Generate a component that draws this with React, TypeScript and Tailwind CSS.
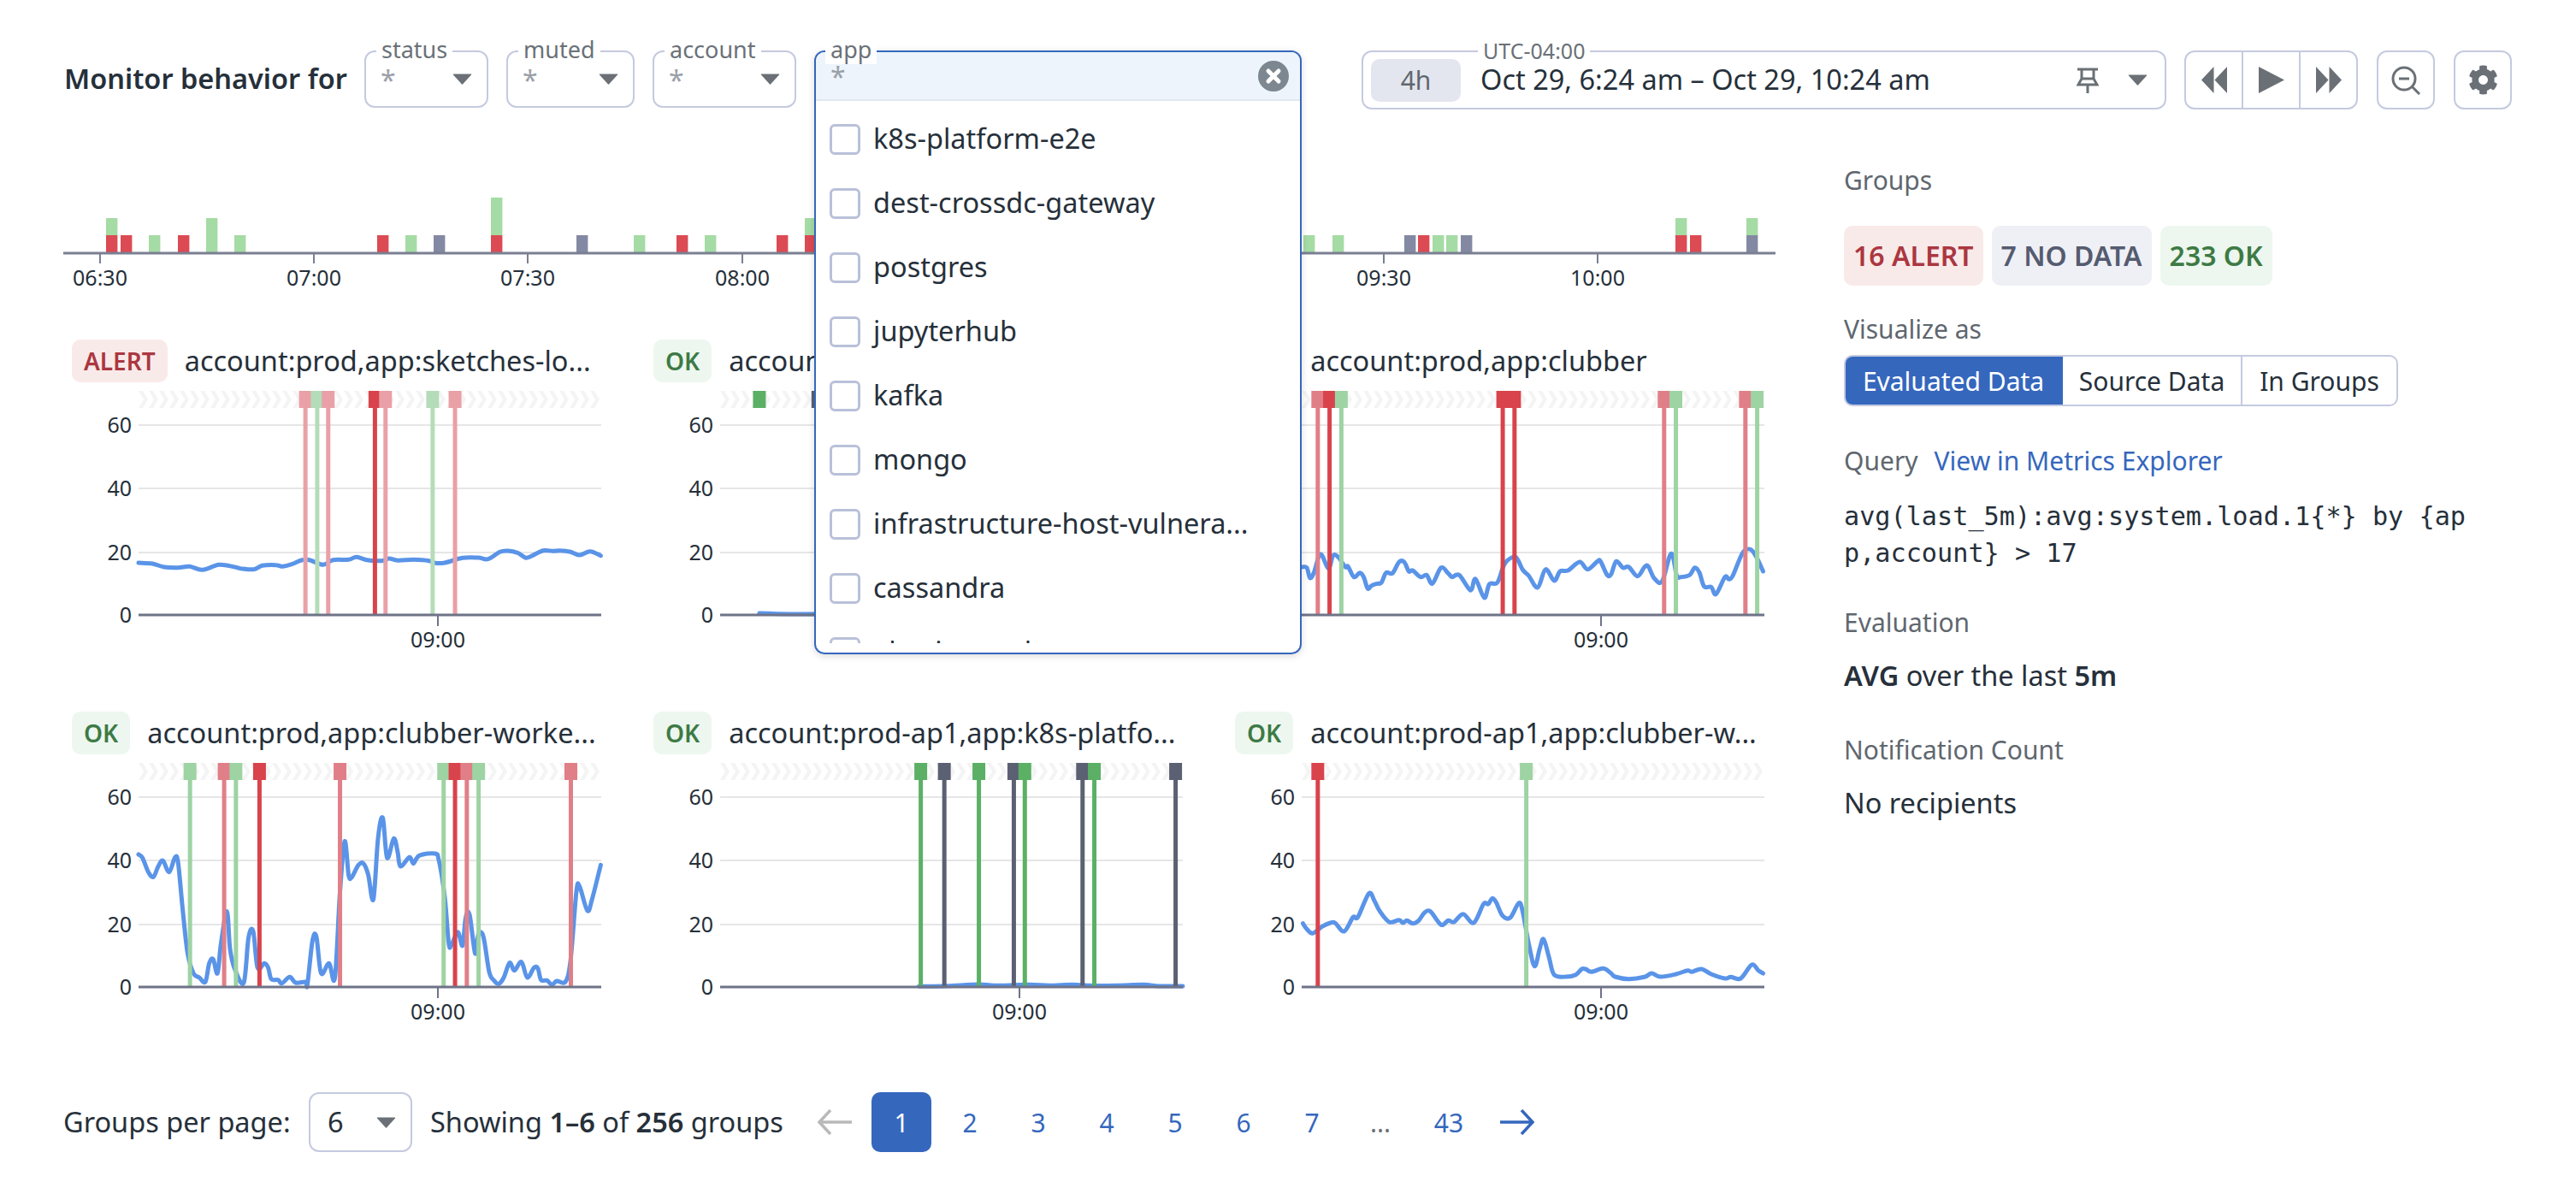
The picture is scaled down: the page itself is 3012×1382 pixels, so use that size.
import { FaCog } from "react-icons/fa";

type Pt = [number, number];
type Marker = [number, string];

const PINK = "#e9a0a7";
const SOFT_GREEN = "#b5dcb9";
const RED = "#d9434c";
const ROSE = "#e17f88";
const GREEN = "#9ed3a3";
const DARK_GREEN = "#5bb065";
const SLATE = "#5b6072";

// trace points are read off the reference crops, so they get scaled back here
const SCALE_X = 2.178;
const SCALE_Y = 3;
const PLOT_W = 541;
const PLOT_H = 262;
const LEFT = 78;

interface ChartProps {
  id: string;
  status: "ALERT" | "OK";
  title: string;
  x0: number;
  y0: number;
  line: Pt[];
  markers: Marker[];
  bandOnly?: boolean;
}

const charts: ChartProps[] = [
  {
    id: "a",
    status: "ALERT",
    title: "account:prod,app:sketches-lo...",
    x0: 265,
    y0: 1018,
    markers: [
      [690, PINK],
      [720, SOFT_GREEN],
      [748, PINK],
      [867, RED],
      [894, PINK],
      [1014, SOFT_GREEN],
      [1071, PINK],
    ],
    line: [
      [265, 835], [300, 838], [330, 850], [365, 852], [395, 848], [428, 860], [470, 842], [510, 850], [525, 855],
      [558, 858], [580, 845], [615, 843], [632, 848], [655, 840], [680, 826], [700, 825], [735, 842], [760, 825],
      [800, 824], [820, 815], [850, 826], [885, 828], [903, 820], [925, 827], [965, 824], [1005, 828], [1020, 836],
      [1045, 835], [1090, 818], [1130, 817], [1155, 822], [1185, 797], [1205, 793], [1230, 800], [1250, 817],
      [1265, 812], [1295, 792], [1320, 794], [1340, 792], [1365, 797], [1388, 808], [1415, 795], [1442, 810],
    ],
  },
  {
    id: "b",
    status: "OK",
    title: "account:prod-ap1,app:dest-cros...",
    x0: 222,
    y0: 1033,
    bandOnly: true,
    markers: [
      [322, DARK_GREEN],
      [471, SLATE],
    ],
    line: [[322, 1027], [400, 1030], [470, 1030]],
  },
  {
    id: "c",
    status: "OK",
    title: "account:prod,app:clubber",
    x0: 267,
    y0: 1018,
    markers: [
      [308, ROSE],
      [338, RED],
      [368, GREEN],
      [779, RED],
      [809, RED],
      [1190, ROSE],
      [1220, GREEN],
      [1397, ROSE],
      [1427, GREEN],
    ],
    line: [
      [267, 850], [280, 852], [288, 888], [298, 870], [315, 805], [335, 855], [347, 810], [360, 815], [378, 850],
      [385, 848], [400, 885], [415, 870], [425, 885], [435, 925], [445, 915], [460, 908], [470, 905], [482, 870],
      [498, 872], [515, 832], [528, 832], [540, 865], [550, 862], [570, 885], [585, 878], [600, 908], [622, 852],
      [640, 872], [650, 885], [660, 878], [670, 880], [692, 925], [700, 928], [710, 892], [732, 958], [745, 910],
      [765, 905], [780, 850], [790, 828], [812, 815], [830, 860], [845, 880], [868, 922], [888, 858], [910, 898],
      [925, 865], [945, 862], [975, 832], [995, 858], [1020, 830], [1028, 830], [1045, 878], [1055, 875], [1068, 830],
      [1085, 852], [1100, 850], [1122, 882], [1140, 850], [1150, 848], [1165, 890], [1185, 900], [1208, 803],
      [1222, 880], [1232, 885], [1255, 878], [1268, 852], [1280, 870], [1292, 918], [1310, 920], [1322, 945],
      [1345, 885], [1355, 893], [1365, 880], [1390, 800], [1410, 788], [1425, 815], [1442, 865],
    ],
  },
  {
    id: "d",
    status: "OK",
    title: "account:prod,app:clubber-worke...",
    x0: 265,
    y0: 1033,
    markers: [
      [396, GREEN],
      [483, ROSE],
      [513, GREEN],
      [573, RED],
      [778, ROSE],
      [1042, GREEN],
      [1071, RED],
      [1101, ROSE],
      [1131, GREEN],
      [1366, ROSE],
    ],
    line: [
      [265, 568], [275, 580], [290, 630], [303, 647], [315, 610], [327, 590], [343, 630], [358, 578], [366, 600],
      [378, 770], [390, 915], [405, 985], [420, 1000], [435, 1015], [445, 950], [455, 935], [466, 985], [475, 880],
      [490, 768], [498, 900], [510, 970], [533, 1018], [545, 860], [557, 838], [568, 965], [585, 950], [595, 965],
      [603, 1005], [620, 1008], [630, 1020], [650, 998], [665, 1018], [690, 1015], [695, 1025], [708, 870], [718, 858],
      [730, 985], [750, 950], [765, 1000], [778, 700], [790, 522], [800, 640], [808, 648], [825, 605], [838, 600],
      [850, 640], [863, 725], [875, 510], [887, 440], [898, 580], [915, 512], [925, 560], [932, 610], [955, 578],
      [965, 600], [980, 572], [1020, 565], [1030, 590], [1045, 720], [1055, 880], [1062, 885], [1078, 840], [1090, 888],
      [1098, 790], [1108, 780], [1122, 915], [1130, 850], [1143, 855], [1158, 980], [1170, 1010], [1182, 1022],
      [1195, 1000], [1210, 948], [1222, 975], [1240, 945], [1255, 1000], [1272, 965], [1282, 968], [1290, 1008],
      [1305, 1010], [1318, 1025], [1330, 1012], [1352, 1015], [1365, 940], [1380, 700], [1388, 680], [1408, 765],
      [1420, 725], [1442, 605],
    ],
  },
  {
    id: "e",
    status: "OK",
    title: "account:prod-ap1,app:k8s-platfo...",
    x0: 222,
    y0: 1033,
    markers: [
      [733, DARK_GREEN],
      [793, SLATE],
      [881, DARK_GREEN],
      [970, SLATE],
      [998, DARK_GREEN],
      [1145, SLATE],
      [1175, DARK_GREEN],
      [1382, SLATE],
    ],
    line: [
      [728, 1031], [800, 1029], [880, 1024], [930, 1028], [1010, 1025], [1060, 1028], [1120, 1025], [1160, 1028],
      [1230, 1028], [1300, 1025], [1340, 1030], [1400, 1030],
    ],
  },
  {
    id: "f",
    status: "OK",
    title: "account:prod-ap1,app:clubber-w...",
    x0: 267,
    y0: 1033,
    markers: [
      [308, RED],
      [839, GREEN],
    ],
    line: [
      [270, 810], [280, 830], [295, 845], [318, 822], [340, 808], [352, 808], [375, 838], [398, 788], [410, 788],
      [438, 705], [452, 730], [465, 765], [490, 805], [515, 798], [525, 808], [535, 800], [550, 810], [565, 800],
      [580, 772], [595, 768], [622, 815], [640, 800], [655, 805], [678, 777], [705, 808], [730, 742], [742, 742],
      [752, 722], [762, 735], [778, 782], [798, 790], [820, 738], [830, 770], [845, 880], [860, 960], [873, 900],
      [883, 865], [897, 930], [910, 990], [940, 997], [965, 990], [980, 970], [990, 970], [1005, 980], [1035, 968],
      [1055, 985], [1065, 997], [1100, 1005], [1140, 998], [1158, 985], [1180, 997], [1220, 988], [1250, 975],
      [1260, 980], [1285, 970], [1310, 988], [1345, 1003], [1360, 998], [1385, 1003], [1413, 955], [1430, 975],
      [1442, 985],
    ],
  },
];

const T_RED = "#dc4a53";
const T_GREEN = "#a5dba4";
const T_GRAY = "#8489a3";

// x, lower bar colour, upper bar colour, upper bar height
const timelineBars: [number, string, string?, number?][] = [
  [124, T_RED, T_GREEN, 20],
  [141, T_RED],
  [174, T_GREEN],
  [208, T_RED],
  [241, T_GREEN, T_GREEN, 20],
  [274, T_GREEN],
  [441, T_RED],
  [474, T_GREEN],
  [507, T_GRAY],
  [574, T_RED, T_GREEN, 44],
  [674, T_GRAY],
  [741, T_GREEN],
  [791, T_RED],
  [824, T_GREEN],
  [908, T_RED],
  [941, T_RED, T_GREEN, 20],
  [1524, T_GREEN],
  [1558, T_GREEN],
  [1642, T_GRAY],
  [1658, T_RED],
  [1675, T_GREEN],
  [1691, T_GREEN],
  [1708, T_GRAY],
  [1959, T_RED, T_GREEN, 20],
  [1976, T_RED],
  [2042, T_GRAY, T_GREEN, 20],
];

const timelineTicks: [number, string][] = [
  [117, "06:30"],
  [367, "07:00"],
  [617, "07:30"],
  [868, "08:00"],
  [1618, "09:30"],
  [1868, "10:00"],
];

const apps = [
  "k8s-platform-e2e",
  "dest-crossdc-gateway",
  "postgres",
  "jupyterhub",
  "kafka",
  "mongo",
  "infrastructure-host-vulnera...",
  "cassandra",
  "elasticsearch",
];

// Catmull-Rom through the points, the reference series are drawn smoothed
function smoothPath(pts: Pt[]) {
  let d = `M${pts[0][0].toFixed(1)} ${pts[0][1].toFixed(1)}`;
  for (let i = 0; i < pts.length - 1; i++) {
    const p0 = pts[Math.max(i - 1, 0)];
    const p1 = pts[i];
    const p2 = pts[i + 1];
    const p3 = pts[Math.min(i + 2, pts.length - 1)];
    const c1x = p1[0] + (p2[0] - p0[0]) / 6;
    const c1y = p1[1] + (p2[1] - p0[1]) / 6;
    const c2x = p2[0] - (p3[0] - p1[0]) / 6;
    const c2y = p2[1] - (p3[1] - p1[1]) / 6;
    d += ` C${c1x.toFixed(1)} ${c1y.toFixed(1)} ${c2x.toFixed(1)} ${c2y.toFixed(1)} ${p2[0].toFixed(1)} ${p2[1].toFixed(1)}`;
  }
  return d;
}

function Caret() {
  return (
    <svg width="23" height="13" viewBox="0 0 23 13" className="shrink-0">
      <path d="M1 0.5 H22 Q22.5 0.5 22 1.5 L12 12.5 Q11.5 13 11 12.5 L1 1.5 Q0.5 0.5 1 0.5Z" fill="#6a7075" />
    </svg>
  );
}

function Filter({ label, width }: { label: string; width: string }) {
  return (
    <div className={`relative flex h-[67px] items-center justify-between rounded-[12px] border-2 border-[#c5cae0] pl-[17px] pr-[17px] ${width}`}>
      <span className="absolute -top-[20px] left-[12px] bg-white px-[6px] text-[27px] leading-[34px] text-[#6a7178]">{label}</span>
      <span className="mt-[3px] text-[32px] text-[#9aa0a8]">*</span>
      <Caret />
    </div>
  );
}

function Chart({ id, status, title, x0, y0, line, markers, bandOnly }: ChartProps) {
  const sx = (x: number) => LEFT + (x - x0) / SCALE_X;
  const sy = (y: number) => PLOT_H + (y - y0) / SCALE_Y;
  const trace = smoothPath(line.map(([x, y]) => [sx(x), sy(y)] as Pt));

  return (
    <div className="w-[680px]">
      <div className="flex h-[50px] items-center gap-[20px]">
        <span
          className={`flex h-[50px] items-center rounded-[10px] px-[14px] text-[28px] font-semibold ${
            status === "ALERT" ? "bg-[#f9eaea] text-[#ab3740]" : "bg-[#edf7ef] text-[#3d7a45]"
          }`}
        >
          {status}
        </span>
        <span className="whitespace-nowrap text-[32.5px] text-[#26303a]">{title}</span>
      </div>
      <svg width="640" height="310" className="mt-[10px] block">
        <defs>
          <pattern id={`hatch-${id}`} width="12" height="20" patternUnits="userSpaceOnUse" x={LEFT}>
            <polygon points="0,0 5,0 11,10 5,20 0,20 6,10" fill="#f4f4f4" />
          </pattern>
        </defs>
        <rect x={LEFT} y="0" width={PLOT_W} height="20" fill={`url(#hatch-${id})`} />
        {[40, 114, 189].map((y) => (
          <line key={y} x1={LEFT} x2={LEFT + PLOT_W} y1={y} y2={y} stroke="#e6e6e6" strokeWidth="2" />
        ))}
        {[["60", 40], ["40", 114], ["20", 189], ["0", 262]].map(([label, y]) => (
          <text key={label} x="70" y={Number(y) + 9} textAnchor="end" className="fill-[#26303a] text-[25px]">
            {label}
          </text>
        ))}
        <path d={trace} fill="none" stroke="#5a94e8" strokeWidth="5" strokeLinejoin="round" strokeLinecap="round" />
        {markers.map(([x, color]) => (
          <g key={x} fill={color}>
            <rect x={sx(x) - 7.5} y="0" width="15" height="20" />
            {!bandOnly && <rect x={sx(x) - 2.5} y="20" width="5" height={PLOT_H - 20} />}
          </g>
        ))}
        <line x1={LEFT} x2={LEFT + PLOT_W} y1={PLOT_H} y2={PLOT_H} stroke="#6f7387" strokeWidth="3" />
        <line x1={LEFT + 350} x2={LEFT + 350} y1={PLOT_H} y2={PLOT_H + 13} stroke="#6f7387" strokeWidth="2" />
        <text x={LEFT + 350} y={PLOT_H + 38} textAnchor="middle" className="fill-[#26303a] text-[25px]">
          09:00
        </text>
      </svg>
    </div>
  );
}

export default function App() {
  return (
    <div className="h-[1382px] w-[3012px] overflow-hidden bg-white pl-[74px] font-['Noto_Sans',sans-serif] text-[#26303a]">
      {/* Header */}
      <div className="flex items-start pt-[59px]">
        <div className="flex h-[67px] w-[352px] items-center pl-[1px] text-[32.5px] font-semibold">Monitor behavior for</div>
        <div className="flex gap-[21px]">
          <Filter label="status" width="w-[145px]" />
          <Filter label="muted" width="w-[150px]" />
          <Filter label="account" width="w-[168px]" />
        </div>

        <div className="relative ml-[21px] h-[67px] w-[570px]">
          {/* Open app dropdown */}
          <div className="absolute inset-x-0 top-0 z-20 h-[706px] rounded-[12px] border-2 border-[#3567bd] bg-white shadow-[0_2px_8px_rgba(0,0,0,0.15)]">
            <span className="absolute -top-[20px] left-[11px] z-10 bg-white px-[6px] text-[27px] leading-[34px] text-[#6a7178]">app</span>
            <div className="flex h-[57px] items-center justify-between rounded-t-[10px] border-b-2 border-[#e1e8f0] bg-[#edf4fc] pl-[17px] pr-[13px]">
              <span className="mt-[3px] text-[32px] text-[#9aa0a8]">*</span>
              <svg width="36" height="36" viewBox="0 0 36 36">
                <circle cx="18" cy="18" r="18" fill="#7d8790" />
                <path d="M12 12 L24 24 M24 12 L12 24" stroke="#fff" strokeWidth="5" strokeLinecap="round" />
              </svg>
            </div>
            <div className="mt-[7px] h-[627px] overflow-hidden pl-[16px]">
              {apps.map((app) => (
                <div key={app} className="flex h-[75px] items-center gap-[15px]">
                  <span className="h-[36px] w-[36px] shrink-0 rounded-[6px] border-[3px] border-[#b9c0d9] bg-white" />
                  <span className="whitespace-nowrap text-[32.5px] text-[#26303a]">{app}</span>
                </div>
              ))}
            </div>
          </div>
        </div>

        {/* Time picker */}
        <div className="relative ml-[70px] flex h-[69px] w-[941px] items-center rounded-[12px] border-2 border-[#c5cae0] pl-[9px] pr-[20px]">
          <span className="absolute -top-[16px] left-[134px] bg-white px-[6px] text-[25px] leading-[28px] text-[#6a7178]">UTC-04:00</span>
          <span className="flex h-[50px] w-[105px] items-center justify-center rounded-[10px] bg-[#e3e6ee] text-[30px] text-[#5f676f]">4h</span>
          <span className="ml-[23px] whitespace-nowrap text-[32.5px]">Oct 29, 6:24 am – Oct 29, 10:24 am</span>
          <svg width="26" height="30" viewBox="0 0 26 30" fill="none" stroke="#6a7075" strokeWidth="3" className="ml-auto mr-[34px]">
            <path d="M1 2 H25 M6 2 V13 M20 2 V13 M6 13 L2 20 H24 L20 13 H6 M13 20 V30" />
          </svg>
          <Caret />
        </div>

        <div className="ml-[21px] flex h-[69px] w-[203px] rounded-[12px] border-2 border-[#c5cae0]">
          <span className="flex flex-1 items-center justify-center">
            <svg width="30" height="31" viewBox="0 0 30 31" fill="#6a7075">
              <path d="M0 15.5 L14.5 0 V31Z M15.5 15.5 L30 0 V31Z" />
            </svg>
          </span>
          <span className="flex flex-1 items-center justify-center border-x-2 border-[#c5cae0]">
            <svg width="30" height="31" viewBox="0 0 30 31" fill="#6a7075">
              <path d="M0 0 L30 15.5 L0 31Z" />
            </svg>
          </span>
          <span className="flex flex-1 items-center justify-center">
            <svg width="30" height="31" viewBox="0 0 30 31" fill="#6a7075">
              <path d="M0 0 L14.5 15.5 L0 31Z M15.5 0 L30 15.5 L15.5 31Z" />
            </svg>
          </span>
        </div>
        <div className="ml-[22px] flex h-[69px] w-[68px] items-center justify-center rounded-[12px] border-2 border-[#c5cae0]">
          <svg width="34" height="34" viewBox="0 0 34 34" fill="none" stroke="#6a7075" strokeWidth="3">
            <circle cx="15" cy="15" r="13" />
            <path d="M9 15 H21 M24.5 24.5 L33 33" />
          </svg>
        </div>
        <div className="ml-[22px] flex h-[69px] w-[68px] items-center justify-center rounded-[12px] border-2 border-[#c5cae0]">
          <FaCog size={35} color="#6a7075" />
        </div>
      </div>

      <div className="flex">
        {/* Left column */}
        <div className="w-[2082px]">
          <svg width="2002" height="114" className="mt-[103px] mb-[52px] block">
            {timelineBars.map(([x, low, up, upH]) => (
              <g key={x}>
                {up && upH ? <rect x={x - 74} y={44 - upH} width="13.4" height={upH} fill={up} /> : null}
                <rect x={x - 74} y="44" width="13.4" height="20" fill={low} />
              </g>
            ))}
            <line x1="0" x2="2002" y1="65" y2="65" stroke="#7b7f92" strokeWidth="3" />
            {timelineTicks.map(([x, label]) => (
              <g key={label}>
                <line x1={x - 74} x2={x - 74} y1="65" y2="77" stroke="#7b7f92" strokeWidth="2" />
                <text x={x - 74} y="103" textAnchor="middle" className="fill-[#26303a] text-[25px]">
                  {label}
                </text>
              </g>
            ))}
          </svg>

          <div className="grid grid-cols-[repeat(3,680px)] gap-y-[65px] pl-[10px]">
            {charts.map((chart) => (
              <Chart key={chart.id} {...chart} />
            ))}
          </div>

          {/* Pagination */}
          <div className="mt-[75px] flex h-[70px] items-center text-[32.5px]">
            <span className="w-[287px] whitespace-nowrap">Groups per page:</span>
            <div className="flex h-[70px] w-[121px] items-center justify-between rounded-[12px] border-2 border-[#c5cae0] pl-[20px] pr-[17px]">
              <span>6</span>
              <Caret />
            </div>
            <span className="ml-[21px] w-[430px] whitespace-nowrap">
              Showing <span className="font-semibold">1–6</span> of <span className="font-semibold">256</span> groups
            </span>
            <span className="flex w-[86px] justify-center">
              <svg width="40" height="30" viewBox="0 0 40 30" fill="none" stroke="#b9b9b9" strokeWidth="3.5">
                <path d="M40 15 H2 M15 1 L2 15 L15 29" />
              </svg>
            </span>
            <div className="flex gap-[10px] text-[30px] text-[#3567bd]">
              {["1", "2", "3", "4", "5", "6", "7", "...", "43"].map((page) => (
                <span
                  key={page}
                  className={`flex h-[70px] w-[70px] items-center justify-center rounded-[10px] ${
                    page === "1" ? "bg-[#3567bd] text-white" : page === "..." ? "text-[#6a7178]" : ""
                  }`}
                >
                  {page}
                </span>
              ))}
              <span className="flex h-[70px] w-[70px] items-center justify-center">
                <svg width="40" height="30" viewBox="0 0 40 30" fill="none" stroke="#3567bd" strokeWidth="3.5">
                  <path d="M0 15 H38 M25 1 L38 15 L25 29" />
                </svg>
              </span>
            </div>
          </div>
        </div>

        {/* Sidebar */}
        <div className="w-[780px] text-[30px]">
          <div className="mt-[63px] leading-[40px] text-[#5f676f]">Groups</div>
          <div className="mt-[33px] flex gap-[10px] text-[32px] font-semibold">
            <span className="flex h-[70px] items-center rounded-[10px] bg-[#f9eaea] px-[11px] text-[#ab3740]">16 ALERT</span>
            <span className="flex h-[70px] items-center rounded-[10px] bg-[#eff0f5] px-[11px] text-[#555b70]">7 NO DATA</span>
            <span className="flex h-[70px] items-center rounded-[10px] bg-[#edf7ef] px-[11px] text-[#3d7a45]">233 OK</span>
          </div>
          <div className="mt-[31px] leading-[40px] text-[#5f676f]">Visualize as</div>
          <div className="mt-[10px] flex h-[60px] w-[648px] overflow-hidden rounded-[10px] border-2 border-[#c5cae0] text-[30px]">
            <span className="-my-[2px] -ml-[2px] flex w-[256px] items-center justify-center bg-[#3567bd] text-white">Evaluated Data</span>
            <span className="flex w-[210px] items-center justify-center border-r-2 border-[#c5cae0]">Source Data</span>
            <span className="flex flex-1 items-center justify-center">In Groups</span>
          </div>
          <div className="mt-[44px] flex gap-[19px] leading-[40px]">
            <span className="text-[#5f676f]">Query</span>
            <span className="text-[#3567bd]">View in Metrics Explorer</span>
          </div>
          <div className="mt-[23px] w-[735px] break-all font-['DejaVu_Sans_Mono',monospace] text-[30.2px] leading-[43px]">
            avg(last_5m):avg:system.load.1{"{*}"} by {"{app,account}"} &gt; 17
          </div>
          <div className="mt-[40px] leading-[40px] text-[#5f676f]">Evaluation</div>
          <div className="mt-[22px] text-[32.5px] leading-[40px]">
            <span className="font-semibold">AVG</span> over the last <span className="font-semibold">5m</span>
          </div>
          <div className="mt-[47px] leading-[40px] text-[#5f676f]">Notification Count</div>
          <div className="mt-[22px] text-[32.5px] leading-[40px]">No recipients</div>
        </div>
      </div>
    </div>
  );
}
